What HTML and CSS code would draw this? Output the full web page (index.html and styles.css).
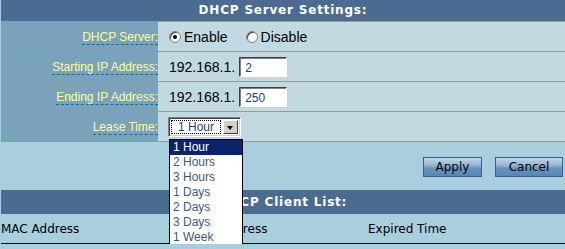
FILE: index.html
```html
<!DOCTYPE html>
<html lang="en">
<head>
    <meta charset="UTF-8">
    <title>DHCP Server Settings</title>
    <link rel="stylesheet" href="styles.css">
</head>
<body>
    <div class="panel">
        <div class="title">DHCP Server Settings:</div>

        <!-- settings rows -->
        <div class="row">
            <div class="label"><span>DHCP Server:</span></div>
            <div class="value">
                <label class="radio"><span class="dot checked"></span>Enable</label>
                <label class="radio"><span class="dot"></span>Disable</label>
            </div>
        </div>
        <div class="row">
            <div class="label"><span>Starting IP Address:</span></div>
            <div class="value">
                <span class="prefix">192.168.1.</span>
                <div class="ip-box">2</div>
            </div>
        </div>
        <div class="row">
            <div class="label"><span>Ending IP Address:</span></div>
            <div class="value">
                <span class="prefix">192.168.1.</span>
                <div class="ip-box">250</div>
            </div>
        </div>
        <div class="row last">
            <div class="label"><span>Lease Time:</span></div>
            <div class="value">
                <div class="select">
                    <div class="select-text"><span>1 Hour</span></div>
                    <div class="select-btn"></div>
                    <ul class="options">
                        <li class="picked">1 Hour</li>
                        <li>2 Hours</li>
                        <li>3 Hours</li>
                        <li>1 Days</li>
                        <li>2 Days</li>
                        <li>3 Days</li>
                        <li>1 Week</li>
                    </ul>
                </div>
            </div>
        </div>

        <div class="buttons">
            <button class="btn btn-apply">Apply</button>
            <button class="btn btn-cancel">Cancel</button>
        </div>

        <div class="title title-list">DHCP Client List:</div>
        <div class="list-head">
            <span>MAC Address</span>
            <span>IP Address</span>
            <span>Expired Time</span>
        </div>
    </div>
</body>
</html>
```

FILE: styles.css
```css
* { padding: 0; margin: 0; box-sizing: border-box; }
body { background: #a9cfdf; font-family: "Liberation Sans", Arial, sans-serif; font-size: 12px; }
.panel { margin-left: 1px; }

.title { height: 21px; background: #4b6b91; color: #fff; font-family: "DejaVu Sans", Verdana, sans-serif; font-weight: bold; font-size: 12px; letter-spacing: 0.8px; text-align: center; line-height: 21px; }
.title-list { height: 24px; line-height: 24px; }

.row { display: grid; grid-template-columns: 157px 1fr; height: 30px; border-top: 1px solid #999; }
.row.last { height: 31px; border-bottom: 1px solid #999; }
.label { background: #7aa2bb; display: flex; justify-content: flex-end; align-items: center; padding-top: 2px; }
.label span { color: #ffff99; border-bottom: 1px dashed #1a6aa0; line-height: 14px; }
.value { background: #c1dae2; display: flex; align-items: center; padding-left: 11px; font-size: 14px; color: #000; }

.radio { display: flex; align-items: center; margin-right: 18px; }
.dot { width: 12px; height: 12px; border-radius: 50%; background: #fff; border: 1px solid #808080; box-shadow: inset 1px 1px 0 #404040; margin-right: 3px; position: relative; }
.dot.checked::after { content: ""; position: absolute; left: 3px; top: 3px; width: 4px; height: 4px; border-radius: 50%; background: #000; }

.prefix { margin-right: 4px; }
.ip-box { width: 48px; height: 20px; background: #fff; border: 1px solid; border-color: #404040 #fff #fff #404040; box-shadow: inset 1px 1px 0 #808080, 1px 1px 0 #d4d0c8; font-size: 12px; color: #1f3f6f; padding: 3px 0 0 5px; }

.select { position: relative; width: 73px; height: 20px; margin-left: -1px; background: #fff; border: 1px solid; border-color: #808080 #fff #fff #808080; box-shadow: inset 1px 1px 0 #404040, inset -1px -1px 0 #d4d0c8; display: flex; padding: 2px; }
.select-text { flex: 1; font-size: 12px; color: #1f3f6f; }
.select-text span { display: block; height: 100%; border: 1px dotted #000; line-height: 12px; padding-left: 6px; margin-right: 2px; }
.select-btn { width: 15px; background: #d4d0c8; border: 1px solid; border-color: #fff #404040 #404040 #fff; position: relative; }
.select-btn::after { content: ""; position: absolute; left: 3px; top: 5px; border-left: 3px solid transparent; border-right: 3px solid transparent; border-top: 4px solid #000; }
.options { position: absolute; left: 0; top: 21px; width: 74px; list-style: none; background: #fff; border: 1px solid #000; font-size: 12px; color: #3c5a80; z-index: 2; }
.options li { height: 15px; line-height: 15px; padding-left: 3px; }
.options li.picked { background: #0a246a; color: #fff; }

.buttons { display: flex; justify-content: flex-end; gap: 13px; padding: 15px 2px 13px 0; }
.btn { height: 20px; border: 1px solid #3d5e8c; background: linear-gradient(#c3d6e8, #8fb0d0 45%, #6a95c0 55%, #5686b6); font-family: "DejaVu Sans", Tahoma, sans-serif; font-size: 12px; color: #000; }
.btn-apply { width: 59px; }
.btn-cancel { width: 68px; }

.list-head { display: grid; grid-template-columns: 204px 163px 1fr; height: 30px; align-items: center; border-bottom: 1px solid #000; font-family: "DejaVu Sans", Verdana, sans-serif; font-size: 12px; color: #000; padding-top: 1px; }
```
